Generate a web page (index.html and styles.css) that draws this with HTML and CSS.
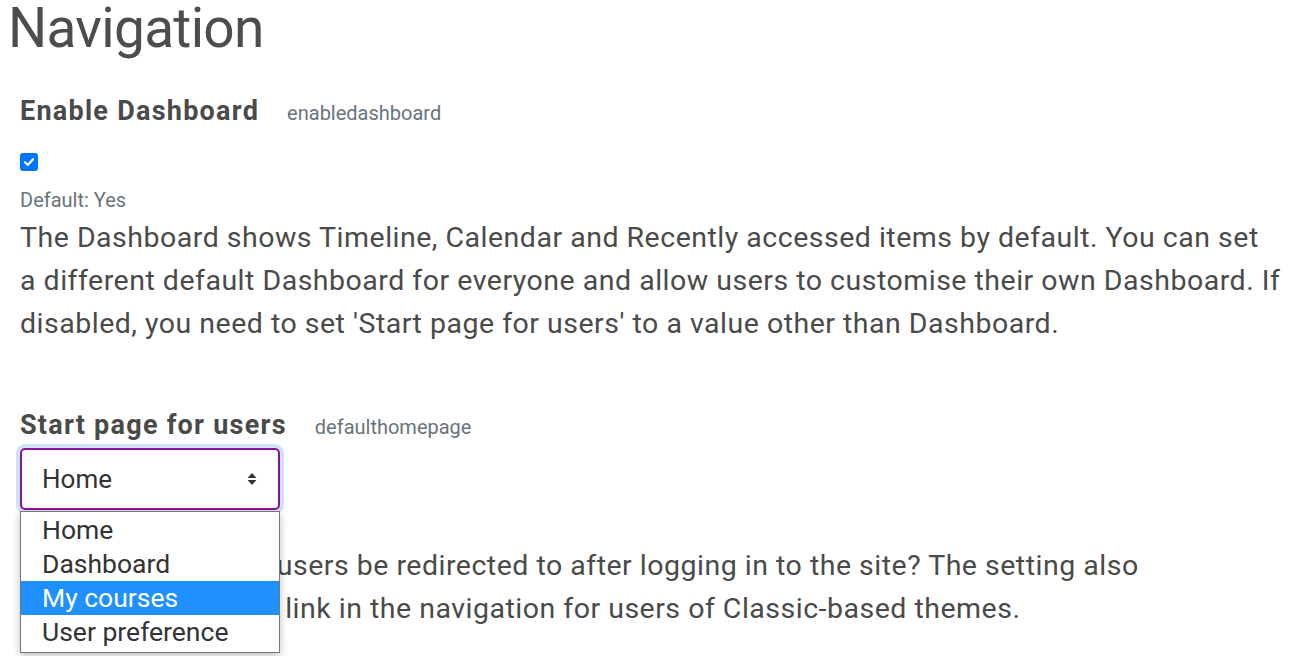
FILE: index.html
```html
<!DOCTYPE html>
<html lang="en">
<head>
    <meta charset="UTF-8">
    <meta name="viewport" content="width=device-width, initial-scale=1.0">
    <title>Navigation - Site administration</title>
    <link rel="stylesheet" href="styles.css">
</head>
<body>
    <main class="page">
        <h2 class="page-title">Navigation</h2>

        <section class="setting">
            <div class="setting-head">
                <h3>Enable Dashboard</h3>
                <span class="shortname">enabledashboard</span>
            </div>
            <div class="setting-control">
                <span class="checkbox">
                    <svg width="12" height="12" viewBox="0 0 12 12"><path d="M2 6.3 4.8 9 10 3.2" fill="none" stroke="#fff" stroke-width="2.2" stroke-linecap="round" stroke-linejoin="round"/></svg>
                </span>
            </div>
            <div class="setting-default">Default: Yes</div>
            <p class="setting-desc">The Dashboard shows Timeline, Calendar and Recently accessed items by default. You can set a different default Dashboard for everyone and allow users to customise their own Dashboard. If disabled, you need to set 'Start page for users' to a value other than Dashboard.</p>
        </section>

        <section class="setting">
            <div class="setting-head">
                <h3>Start page for users</h3>
                <span class="shortname">defaulthomepage</span>
            </div>
            <div class="select-wrap">
                <div class="select">
                    <span>Home</span>
                    <svg width="12" height="14" viewBox="0 0 12 14"><path d="M6 1 10.5 6h-9zM6 13 1.5 8h9z" fill="#333"/></svg>
                </div>
                <ul class="select-menu">
                    <li>Home</li>
                    <li>Dashboard</li>
                    <li class="active">My courses</li>
                    <li>User preference</li>
                </ul>
            </div>
            <div class="setting-default">Default: Home</div>
            <p class="setting-desc">Which page should users be redirected to after logging in to the site? The setting also determines the first link in the navigation for users of Classic-based themes.</p>
        </section>
    </main>
</body>
</html>
```

FILE: styles.css
```css
body {
    font-family: Roboto, "Liberation Sans", sans-serif;
    background-color: #fff;
    color: #4a4a4a;
    margin: 0;
    padding: 0;
}
.page {
    padding: 1px 30px 28px 20px;
}
.page-title {
    font-size: 55px;
    font-weight: 400;
    line-height: 1;
    letter-spacing: -0.7px;
    margin: 0 0 0 -12px;
    color: #4d4d4d;
}
.setting {
    margin-top: 35px;
}
.setting + .setting {
    margin-top: 60px;
}
.setting-head {
    display: flex;
    align-items: baseline;
    gap: 28px;
}
.setting-head h3 {
    font-size: 27px;
    font-weight: 700;
    letter-spacing: 1.25px;
    margin: 0;
    line-height: 1.5;
}
.shortname {
    font-size: 20px;
    color: #6a737b;
}
.setting-control {
    padding: 21px 0 14px;
}
.checkbox {
    display: flex;
    align-items: center;
    justify-content: center;
    width: 18px;
    height: 18px;
    border-radius: 3px;
    background-color: #0075ff;
}
.setting-default {
    font-size: 20px;
    color: #6a737b;
    line-height: 1.5;
}
.setting-desc {
    font-size: 28.5px;
    letter-spacing: 0.5px;
    line-height: 43px;
    margin: 1px 0 0;
}
.select-wrap {
    position: relative;
    width: 260px;
    margin-top: 3px;
    margin-bottom: 3px;
}
.select {
    display: flex;
    align-items: center;
    justify-content: space-between;
    height: 62px;
    box-sizing: border-box;
    padding: 0 20px;
    border: 2px solid #8e0f9a;
    border-radius: 5px;
    box-shadow: 0 0 0 4px #cfe3f7;
    font-size: 26px;
    color: #333;
}
.select-menu {
    position: absolute;
    top: 63px;
    left: 0;
    width: 260px;
    box-sizing: border-box;
    list-style: none;
    margin: 0;
    padding: 1px 0 3px;
    background: #fff;
    border: 1px solid #767676;
    box-shadow: 0 3px 8px rgba(0, 0, 0, 0.25);
    z-index: 2;
}
.select-menu li {
    font-size: 26.5px;
    line-height: 34px;
    padding-left: 21px;
    color: #333;
}
.select-menu li.active {
    background-color: #1e90ff;
    color: #fff;
}
```
